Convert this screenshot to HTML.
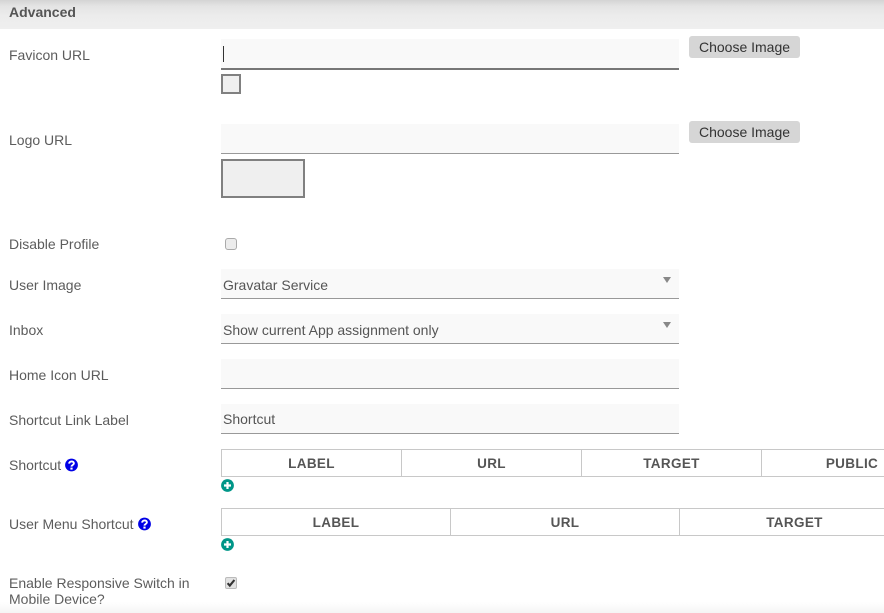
<!DOCTYPE html>
<html><head><meta charset="utf-8">
<style>
html,body{margin:0;padding:0;background:#fff}
body{width:884px;height:613px;position:relative;overflow:hidden;font-family:"Liberation Sans",sans-serif;font-size:14px;color:#555}
.a{position:absolute;white-space:nowrap}
.l{position:absolute;left:9px;line-height:16px;color:#5c5c5c;white-space:nowrap}
.i{position:absolute;left:221px;width:458px;height:29px;background:#f9f9f9;border-bottom:1px solid #999;color:#555}
.i span{position:absolute;left:2px;top:8px;line-height:16px}
.b{position:absolute;left:689px;width:111px;height:22px;background:#d6d6d6;border-radius:3px;text-align:center;line-height:22px;color:#333}
.p{position:absolute;box-sizing:border-box;background:#efefef;border:2px solid #808080}
.t{position:absolute;left:221px;width:663px;height:28px;box-sizing:border-box;border:1px solid #c8c8c8;border-right:0;font-weight:bold;font-size:13.5px;color:#555;line-height:27px;text-align:center;letter-spacing:.35px;overflow:hidden}
.t div{position:absolute;top:0;height:26px;box-sizing:border-box;border-right:1px solid #c8c8c8}
.t div:last-child{border-right:0}
.ar{position:absolute;left:663px;width:0;height:0;border-left:4px solid transparent;border-right:4px solid transparent;border-top:6px solid #888}
svg{position:absolute}
</style></head><body>
<div class="a" style="left:0;top:0;width:884px;height:29px;background:linear-gradient(#d4d4d4 0,#e4e4e4 6px,#ececec 16px,#efefef 29px)"></div>
<div class="a" style="left:9px;top:4px;font-weight:bold;line-height:16px;color:#555">Advanced</div>

<div class="l" style="top:47px">Favicon URL</div>
<div class="i" style="top:39px;height:29px;border-bottom:2px solid #777"></div>
<div class="a" style="left:223px;top:46px;width:1px;height:16px;background:#333"></div>
<div class="b" style="top:36px">Choose Image</div>
<div class="p" style="left:221px;top:74px;width:20px;height:20px"></div>

<div class="l" style="top:132px">Logo URL</div>
<div class="i" style="top:124px"></div>
<div class="b" style="top:121px">Choose Image</div>
<div class="p" style="left:221px;top:159px;width:84px;height:39px"></div>

<div class="l" style="top:236px">Disable Profile</div>
<div class="a" style="left:225px;top:238px;width:12px;height:12px;box-sizing:border-box;background:#ececec;border:1px solid #aaa;border-radius:3px"></div>

<div class="l" style="top:277px">User Image</div>
<div class="i" style="top:269px"><span>Gravatar Service</span></div>
<div class="ar" style="top:277px"></div>

<div class="l" style="top:322px">Inbox</div>
<div class="i" style="top:314px"><span>Show current App assignment only</span></div>
<div class="ar" style="top:322px"></div>

<div class="l" style="top:367px">Home Icon URL</div>
<div class="i" style="top:359px"></div>

<div class="l" style="top:412px">Shortcut Link Label</div>
<div class="i" style="top:404px"><span style="top:7px">Shortcut</span></div>

<div class="l" style="top:457px">Shortcut</div>
<svg style="left:65px;top:458px" width="13" height="14" viewBox="0 0 13 14"><circle cx="6.5" cy="7" r="6.4" fill="#0000e6"/><path d="M4.2 5.6C4.2 2.6 8.9 2.8 8.9 5.4C8.9 7 6.5 7 6.5 8.6" fill="none" stroke="#fff" stroke-width="1.9"/><rect x="5.4" y="9.6" width="2.2" height="2" fill="#fff"/></svg>
<div class="t" style="top:449px">
<div style="left:0;width:180px">LABEL</div><div style="left:180px;width:180px">URL</div><div style="left:360px;width:180px">TARGET</div><div style="left:540px;width:180px">PUBLIC</div>
</div>
<svg style="left:221px;top:479px" width="13" height="13" viewBox="0 0 13 13"><circle cx="6.5" cy="6.5" r="6.4" fill="#009688"/><path d="M6.5 3v7M3 6.5h7" stroke="#fff" stroke-width="2.2"/></svg>

<div class="l" style="top:516px">User Menu Shortcut</div>
<svg style="left:138px;top:517px" width="13" height="14" viewBox="0 0 13 14"><circle cx="6.5" cy="7" r="6.4" fill="#0000e6"/><path d="M4.2 5.6C4.2 2.6 8.9 2.8 8.9 5.4C8.9 7 6.5 7 6.5 8.6" fill="none" stroke="#fff" stroke-width="1.9"/><rect x="5.4" y="9.6" width="2.2" height="2" fill="#fff"/></svg>
<div class="t" style="top:508px">
<div style="left:0;width:229px">LABEL</div><div style="left:229px;width:229px">URL</div><div style="left:458px;width:229px">TARGET</div>
</div>
<svg style="left:221px;top:538px" width="13" height="13" viewBox="0 0 13 13"><circle cx="6.5" cy="6.5" r="6.4" fill="#009688"/><path d="M6.5 3v7M3 6.5h7" stroke="#fff" stroke-width="2.2"/></svg>

<div class="l" style="top:575px">Enable Responsive Switch in</div>
<div class="l" style="top:591px">Mobile Device?</div>
<div class="a" style="left:225px;top:577px;width:12px;height:12px;box-sizing:border-box;background:#e2e2e2;border:1px solid #bbb;border-radius:2px"></div>
<svg style="left:225px;top:577px" width="12" height="12" viewBox="0 0 12 12"><path d="M2.6 6.2L4.8 8.6L9.4 3" fill="none" stroke="#333" stroke-width="2.1"/></svg>
<div class="a" style="left:0;top:602px;width:884px;height:11px;background:linear-gradient(rgba(245,245,245,0),#f5f5f5)"></div>
</body></html>
